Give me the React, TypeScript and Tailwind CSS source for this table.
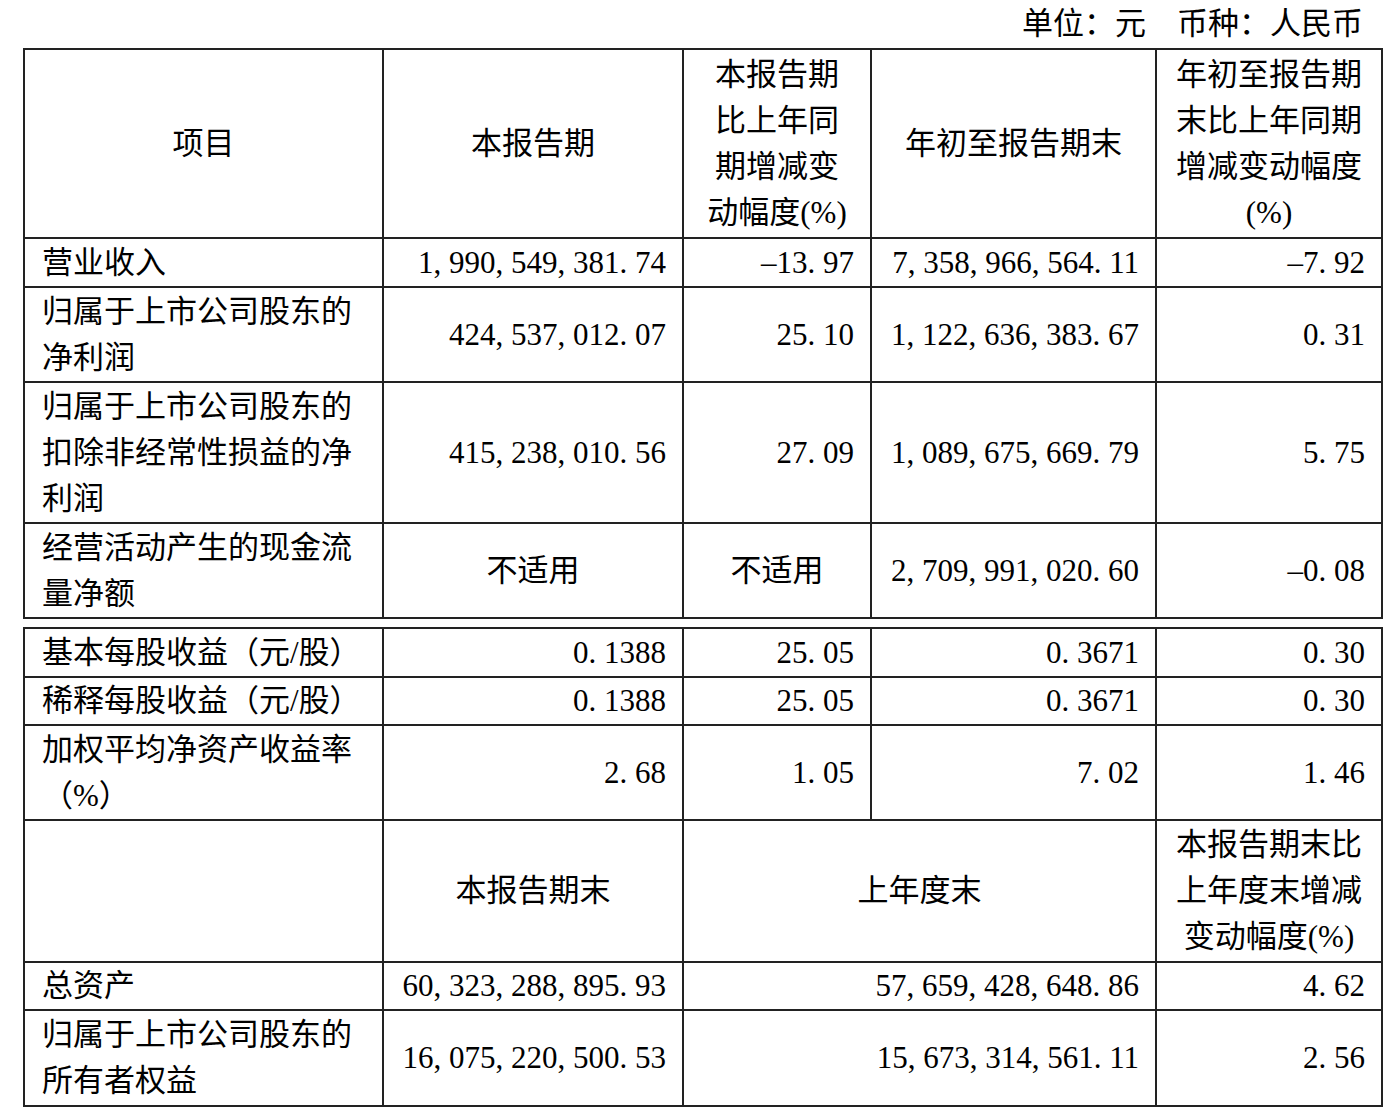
import React from "react";

const FONT = "[font-family:'Liberation_Serif','Noto_Sans_CJK_SC',serif]";

function Num({ v }: { v: string }) {
  return (
    <>
      {v.split("").map((c, i) =>
        c === "," || c === "." ? (
          <span key={i} className="inline-block w-[0.5em] text-left">
            {c}
          </span>
        ) : c === "-" ? (
          <span key={i} className="inline-block w-[0.5em] text-center">
            –
          </span>
        ) : (
          <React.Fragment key={i}>{c}</React.Fragment>
        )
      )}
    </>
  );
}

const cell = "border-2 border-[#222] px-[16px] align-middle";
const L = `${cell} text-left pl-[17px] whitespace-nowrap`;
const R = `${cell} text-right whitespace-nowrap`;
const C = `${cell} text-center whitespace-nowrap`;

function Cols() {
  return (
    <colgroup>
      <col className="w-[359px]" />
      <col className="w-[300px]" />
      <col className="w-[188px]" />
      <col className="w-[285px]" />
      <col className="w-[226px]" />
    </colgroup>
  );
}

export default function App() {
  return (
    <div className={`w-[1392px] h-[1112px] bg-white text-black text-[31px] leading-[46px] ${FONT}`}>
      <div className="h-[48px] flex items-center justify-end pr-[29px]">
        单位：元　币种：人民币
      </div>
      <table className="ml-[23px] w-[1360px] table-fixed border-collapse">
        <Cols />
        <tbody>
          <tr className="h-[189px]">
            <td className={C}>项目</td>
            <td className={C}>本报告期</td>
            <td className={C}>
              本报告期
              <br />
              比上年同
              <br />
              期增减变
              <br />
              动幅度(%)
            </td>
            <td className={C}>年初至报告期末</td>
            <td className={C}>
              年初至报告期
              <br />
              末比上年同期
              <br />
              增减变动幅度
              <br />
              (%)
            </td>
          </tr>
          <tr className="h-[49px]">
            <td className={L}>营业收入</td>
            <td className={R}>
              <Num v="1,990,549,381.74" />
            </td>
            <td className={R}>
              <Num v="-13.97" />
            </td>
            <td className={R}>
              <Num v="7,358,966,564.11" />
            </td>
            <td className={R}>
              <Num v="-7.92" />
            </td>
          </tr>
          <tr className="h-[95px]">
            <td className={L}>
              归属于上市公司股东的
              <br />
              净利润
            </td>
            <td className={R}>
              <Num v="424,537,012.07" />
            </td>
            <td className={R}>
              <Num v="25.10" />
            </td>
            <td className={R}>
              <Num v="1,122,636,383.67" />
            </td>
            <td className={R}>
              <Num v="0.31" />
            </td>
          </tr>
          <tr className="h-[141px]">
            <td className={L}>
              归属于上市公司股东的
              <br />
              扣除非经常性损益的净
              <br />
              利润
            </td>
            <td className={R}>
              <Num v="415,238,010.56" />
            </td>
            <td className={R}>
              <Num v="27.09" />
            </td>
            <td className={R}>
              <Num v="1,089,675,669.79" />
            </td>
            <td className={R}>
              <Num v="5.75" />
            </td>
          </tr>
          <tr className="h-[95px]">
            <td className={L}>
              经营活动产生的现金流
              <br />
              量净额
            </td>
            <td className={C}>不适用</td>
            <td className={C}>不适用</td>
            <td className={R}>
              <Num v="2,709,991,020.60" />
            </td>
            <td className={R}>
              <Num v="-0.08" />
            </td>
          </tr>
        </tbody>
      </table>
      <table className="ml-[23px] mt-[8px] w-[1360px] table-fixed border-collapse">
        <Cols />
        <tbody>
          <tr className="h-[49px]">
            <td className={L}>基本每股收益（元/股）</td>
            <td className={R}>
              <Num v="0.1388" />
            </td>
            <td className={R}>
              <Num v="25.05" />
            </td>
            <td className={R}>
              <Num v="0.3671" />
            </td>
            <td className={R}>
              <Num v="0.30" />
            </td>
          </tr>
          <tr className="h-[48px]">
            <td className={L}>稀释每股收益（元/股）</td>
            <td className={R}>
              <Num v="0.1388" />
            </td>
            <td className={R}>
              <Num v="25.05" />
            </td>
            <td className={R}>
              <Num v="0.3671" />
            </td>
            <td className={R}>
              <Num v="0.30" />
            </td>
          </tr>
          <tr className="h-[95px]">
            <td className={L}>
              加权平均净资产收益率
              <br />
              （%）
            </td>
            <td className={R}>
              <Num v="2.68" />
            </td>
            <td className={R}>
              <Num v="1.05" />
            </td>
            <td className={R}>
              <Num v="7.02" />
            </td>
            <td className={R}>
              <Num v="1.46" />
            </td>
          </tr>
          <tr className="h-[142px]">
            <td className={L}></td>
            <td className={C}>本报告期末</td>
            <td className={C} colSpan={2}>
              上年度末
            </td>
            <td className={C}>
              本报告期末比
              <br />
              上年度末增减
              <br />
              变动幅度(%)
            </td>
          </tr>
          <tr className="h-[48px]">
            <td className={L}>总资产</td>
            <td className={R}>
              <Num v="60,323,288,895.93" />
            </td>
            <td className={R} colSpan={2}>
              <Num v="57,659,428,648.86" />
            </td>
            <td className={R}>
              <Num v="4.62" />
            </td>
          </tr>
          <tr className="h-[96px]">
            <td className={L}>
              归属于上市公司股东的
              <br />
              所有者权益
            </td>
            <td className={R}>
              <Num v="16,075,220,500.53" />
            </td>
            <td className={R} colSpan={2}>
              <Num v="15,673,314,561.11" />
            </td>
            <td className={R}>
              <Num v="2.56" />
            </td>
          </tr>
        </tbody>
      </table>
    </div>
  );
}
